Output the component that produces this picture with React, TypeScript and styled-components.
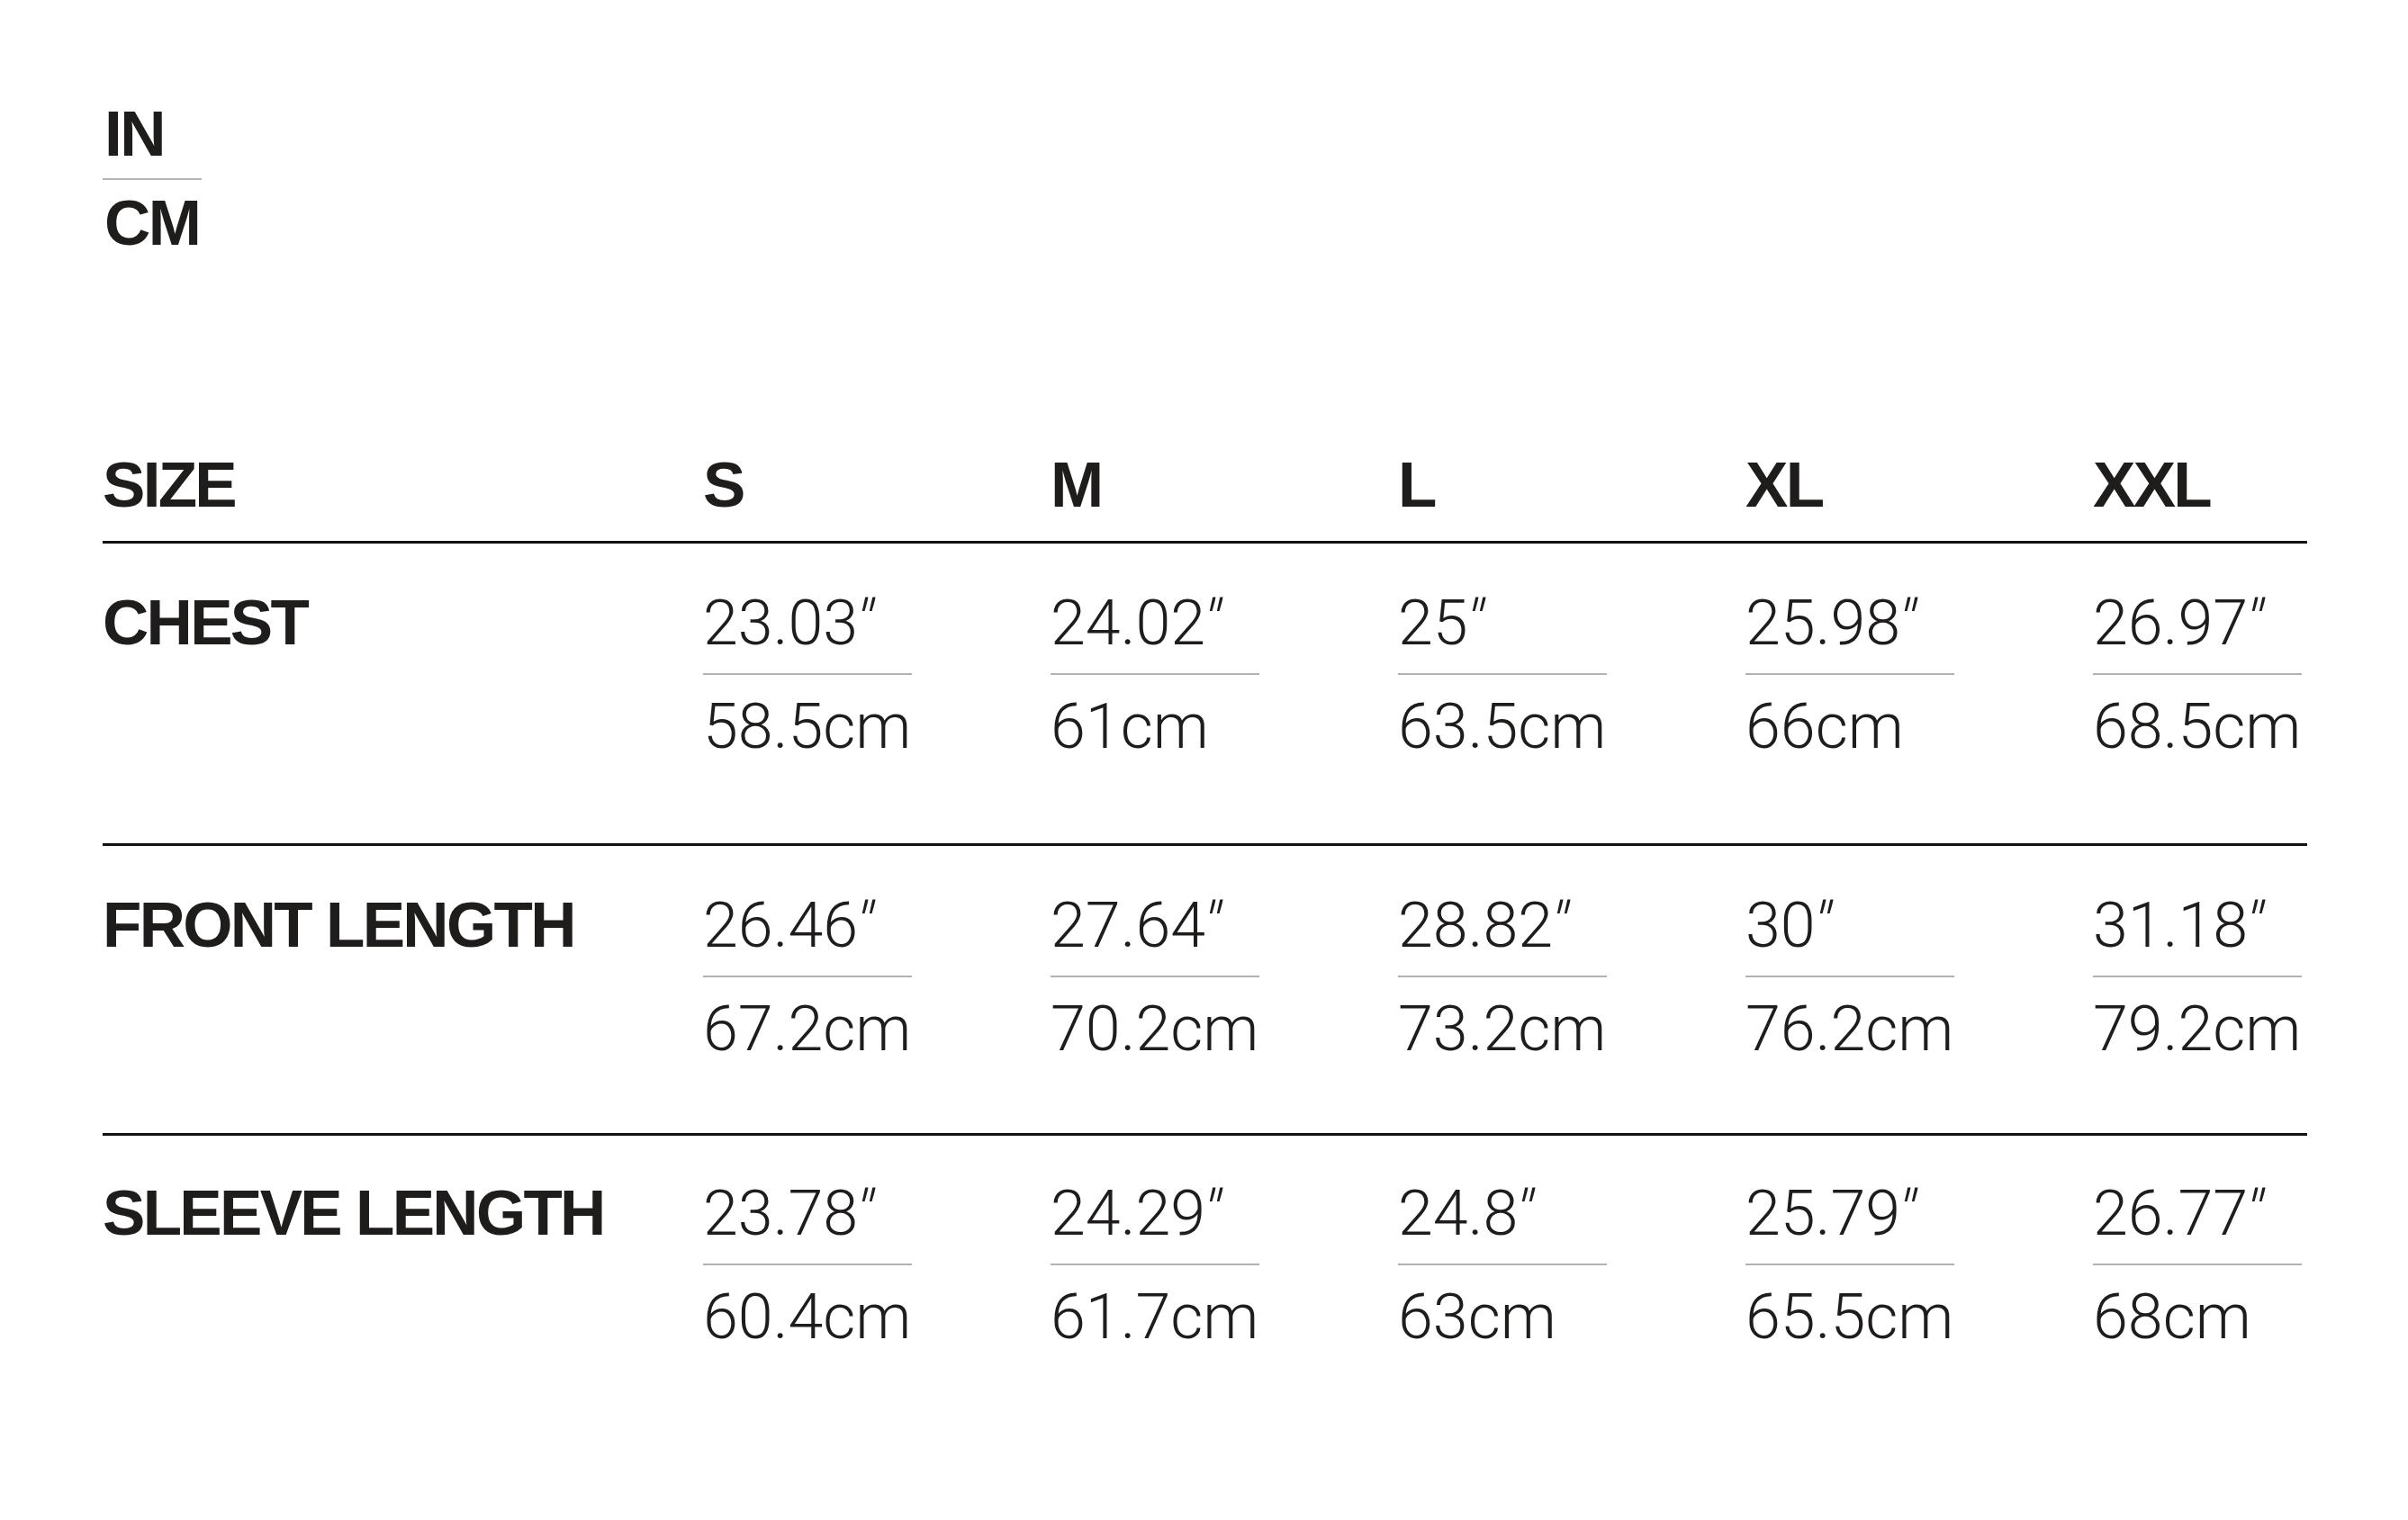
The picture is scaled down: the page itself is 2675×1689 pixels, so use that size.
import styled, { createGlobalStyle } from 'styled-components';

const GlobalStyle = createGlobalStyle`
  html, body {
    margin: 0;
    padding: 0;
    background: #ffffff;
  }
  body {
    font-family: "Liberation Sans", Arial, sans-serif;
    color: #221f1f;
  }
`;

const Page = styled.div`
  width: 2675px;
  min-height: 1689px;
  box-sizing: border-box;
  padding: 114px 0 0 114px;
  background: #ffffff;
`;

const UnitToggle = styled.div`
  display: flex;
  flex-direction: column;
  width: 110px;
`;

const UnitOption = styled.span`
  font-family: "Liberation Sans", Arial, sans-serif;
  font-weight: 700;
  font-size: 71px;
  line-height: 70px;
  letter-spacing: -2.6px;
  color: #1f1c1c;
  padding-left: 2px;
`;

const UnitDivider = styled.div`
  height: 2px;
  background: #b5b5b5;
  margin: 14px 0 13px;
`;

const Table = styled.div`
  width: 2449px;
  margin-top: 221px;
`;

const Row = styled.div<{ $top: number; $bottom: number; $ruled?: boolean }>`
  display: grid;
  grid-template-columns: 667px repeat(4, 386px) 1fr;
  padding-top: ${(p) => p.$top}px;
  padding-bottom: ${(p) => p.$bottom}px;
  border-top: ${(p) => (p.$ruled ? '3px solid #111' : 'none')};
`;

const Heading = styled.div`
  font-family: "Liberation Sans", Arial, sans-serif;
  font-weight: 700;
  font-size: 71px;
  line-height: 70px;
  letter-spacing: -2.7px;
  color: #1f1c1c;
  white-space: nowrap;
`;

const Cell = styled.div`
  display: flex;
  flex-direction: column;
  width: 232px;
`;

const Value = styled.span`
  font-family: Roboto, "Liberation Sans", sans-serif;
  font-weight: 300;
  font-size: 70px;
  line-height: 70px;
  color: #1f1c1c;
  white-space: nowrap;
`;

const Prime = styled.span`
  display: inline-block;
  transform: skewX(-12deg);
  margin-left: -3px;
`;

const CellDivider = styled.div`
  height: 2px;
  background: #b3b3b3;
  margin: 21px 0 22px;
`;

const sizes = ['S', 'M', 'L', 'XL', 'XXL'];

const measurements = [
  {
    id: 'chest',
    name: 'CHEST',
    inches: ['23.03', '24.02', '25', '25.98', '26.97'],
    cm: ['58.5', '61', '63.5', '66', '68.5'],
    top: 53,
    bottom: 95,
  },
  {
    id: 'front',
    name: 'FRONT LENGTH',
    inches: ['26.46', '27.64', '28.82', '30', '31.18'],
    cm: ['67.2', '70.2', '73.2', '76.2', '79.2'],
    top: 53,
    bottom: 81,
  },
  {
    id: 'sleeve',
    name: 'SLEEVE LENGTH',
    inches: ['23.78', '24.29', '24.8', '25.79', '26.77'],
    cm: ['60.4', '61.7', '63', '65.5', '68'],
    top: 51,
    bottom: 120,
  },
];

export default function App() {
  return (
    <>
      <GlobalStyle />
      <Page>
        <UnitToggle>
          <UnitOption>IN</UnitOption>
          <UnitDivider />
          <UnitOption>CM</UnitOption>
        </UnitToggle>

        <Table>
          <Row $top={0} $bottom={27}>
            <Heading>SIZE</Heading>
            {sizes.map((size) => (
              <Heading key={size}>{size}</Heading>
            ))}
          </Row>
          {measurements.map((row) => (
            <Row key={row.id} $top={row.top} $bottom={row.bottom} $ruled>
              <Heading>{row.name}</Heading>
              {row.inches.map((inch, i) => (
                <Cell key={inch + i}>
                  <Value>
                    {inch}
                    <Prime>"</Prime>
                  </Value>
                  <CellDivider />
                  <Value>{row.cm[i]}cm</Value>
                </Cell>
              ))}
            </Row>
          ))}
        </Table>
      </Page>
    </>
  );
}
